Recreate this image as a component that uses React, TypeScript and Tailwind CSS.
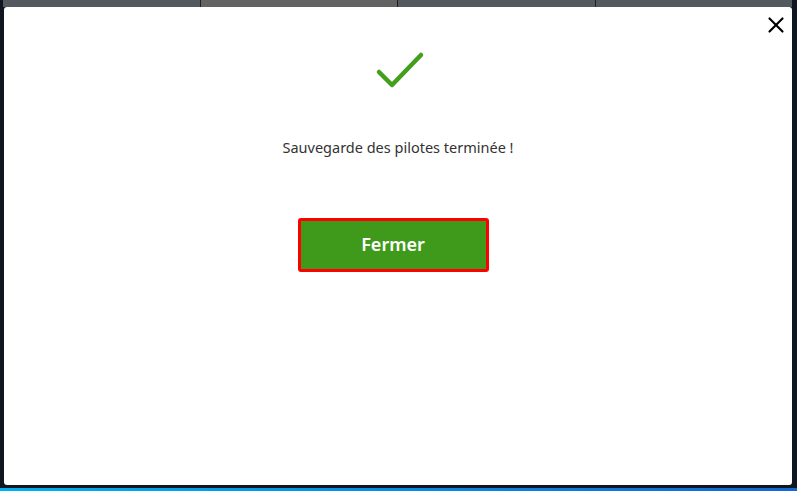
import { X } from "lucide-react";

const tabs = [
  { id: 1, active: false },
  { id: 2, active: true },
  { id: 3, active: false },
  { id: 4, active: false },
];

export default function App() {
  return (
    <div
      className="flex h-[491px] w-[797px] flex-col overflow-hidden bg-[#0f1620]"
      style={{ fontFamily: '"Noto Sans", "Open Sans", sans-serif' }}
    >
      {/* Tabs strip behind the dialog */}
      <div className="flex h-[7px] pl-[3px] pr-[5px]">
        {tabs.map((t) => (
          <div
            key={t.id}
            className={`flex-1 border-r border-[#1b2128] last:border-r-0 ${
              t.active ? "bg-[#636363]" : "bg-[#54595f]"
            }`}
          />
        ))}
      </div>

      {/* Dialog */}
      <div className="relative mx-[5px] ml-[4px] flex flex-1 flex-col items-center rounded-[3px] bg-white">
        <button className="absolute right-[3px] top-[5px] text-black">
          <X className="h-[26px] w-[26px]" strokeWidth={2} />
        </button>

        <svg
          className="ml-[6px] mt-[42px]"
          width="52"
          height="40"
          viewBox="0 0 52 40"
          fill="none"
        >
          <path
            d="M4 23 L17 36 L46 6"
            stroke="#44a01c"
            strokeWidth="4.5"
            strokeLinecap="round"
            strokeLinejoin="round"
          />
        </svg>

        <p className="mt-[48px] text-[14.5px] text-[#333]">
          Sauvegarde des pilotes terminée !
        </p>

        <button className="mr-[10px] mt-[59px] flex h-[54px] w-[191px] items-center justify-center rounded-[3px] border-[3px] border-[#ff0000] bg-[#3f9a1b] text-[18px] font-semibold text-white">
          Fermer
        </button>
      </div>

      <div className="h-[3px]" />
      <div className="h-[3px] bg-gradient-to-r from-[#00b0f0] to-[#1467d6]" />
    </div>
  );
}
